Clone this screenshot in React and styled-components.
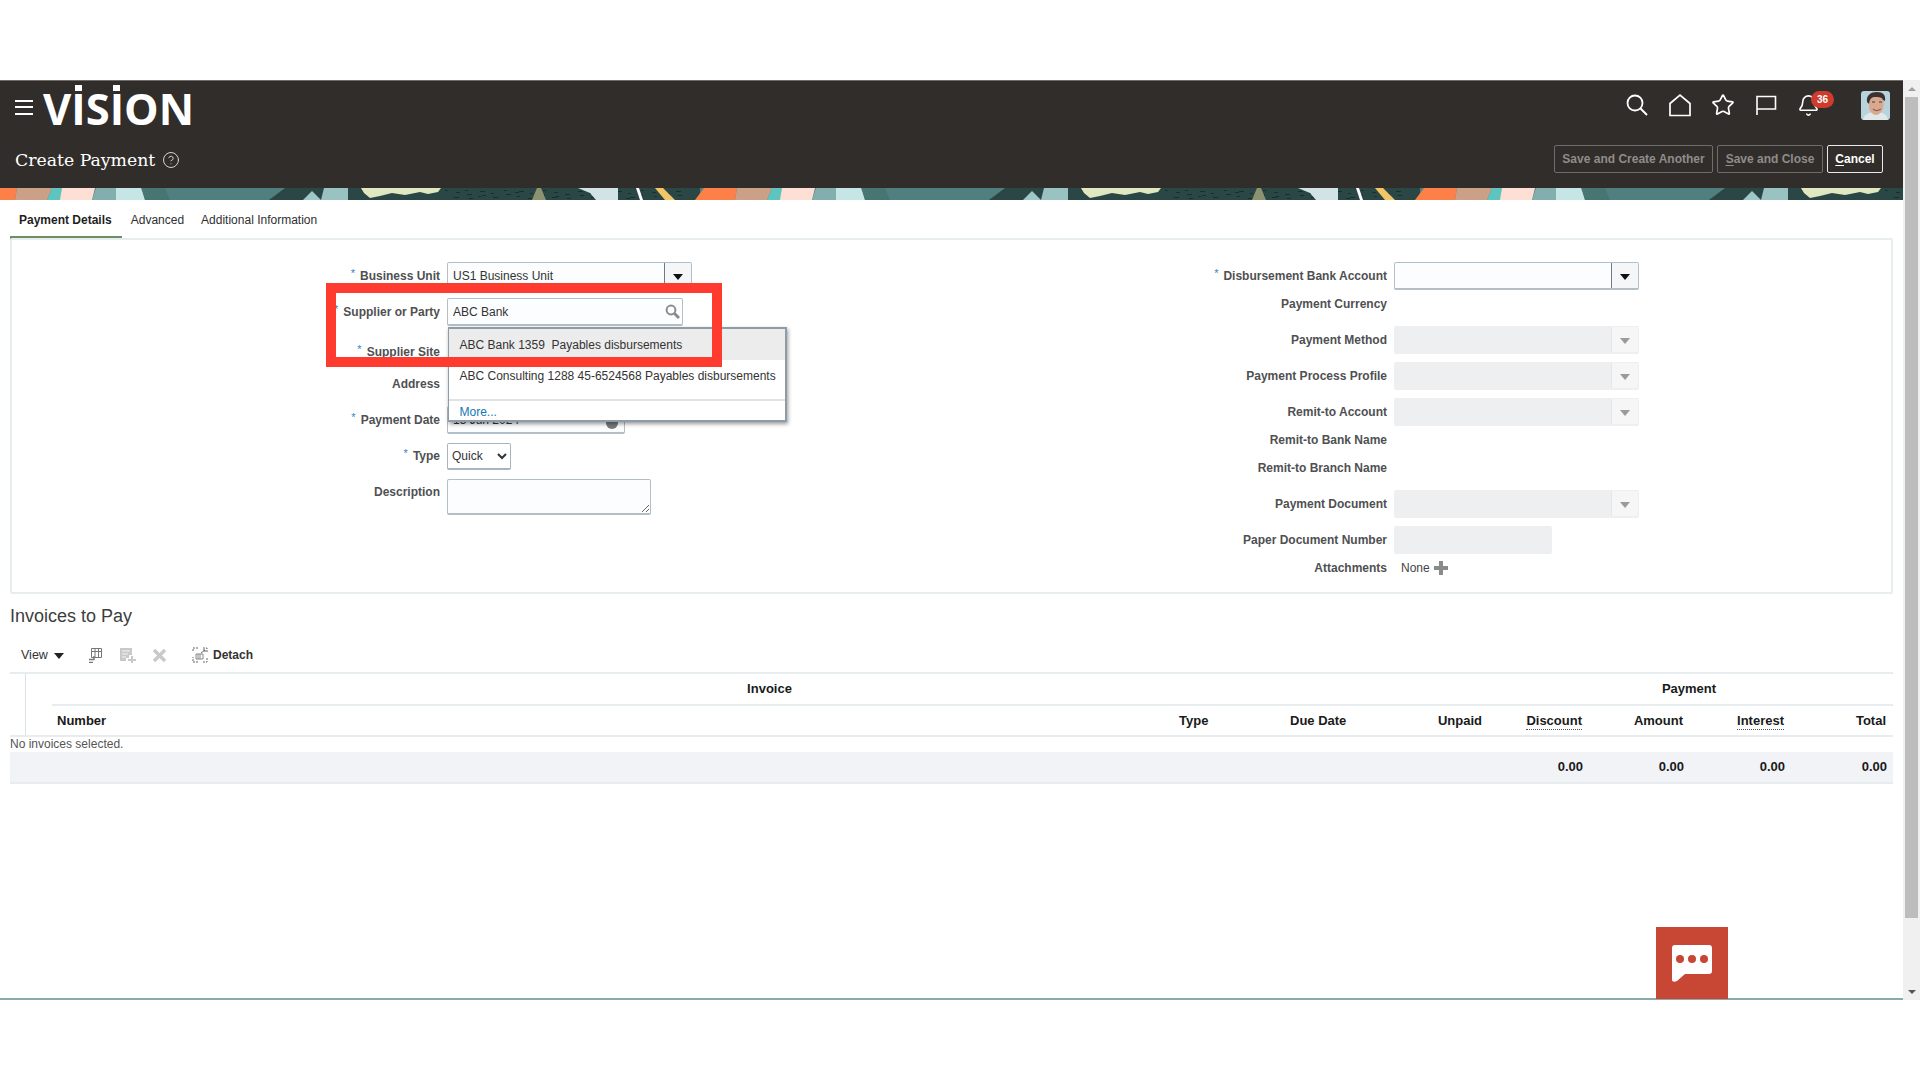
import React from 'react'
import styled, { createGlobalStyle } from 'styled-components'
import { Star, Bell, CircleHelp } from 'lucide-react'

const GlobalStyle = createGlobalStyle`
  html, body {
    margin: 0;
    height: 1080px;
    overflow: hidden;
    background: #fff;
    font-family: "Liberation Sans", Arial, sans-serif;
    font-size: 12px;
  }
  * { box-sizing: border-box; }
`

const Frame = styled.div`
  margin-top: 80px;
  height: 920px;
  display: flex;
`

const Main = styled.div`
  position: relative;
  width: 1903px;
  border-bottom: 2px solid #8aabaa;
`

const Header = styled.header`
  height: 108px;
  background: #312d2a;
  border-top: 1px solid #6f6c6a;
  color: #fff;
`

const TopRow = styled.div`
  height: 50px;
  display: flex;
  align-items: center;
  padding: 0 13px 0 15px;
`

const Hamburger = styled.div`
  width: 18px;
  height: 15px;
  margin-top: 2px;
  border-top: 2px solid #fff;
  border-bottom: 2px solid #fff;
  display: flex;
  align-items: center;
  &::before {
    content: '';
    display: block;
    width: 100%;
    height: 2px;
    background: #fff;
  }
`

const Logo = styled.div`
  margin-left: 10px;
  margin-top: 6px;
  font-family: "Open Sans", sans-serif;
  font-weight: 700;
  font-size: 43.5px;
  line-height: 44px;
  color: #fff;
  display: flex;
`

const LogoI = styled.span`
  position: relative;
  &::before {
    content: '';
    position: absolute;
    left: 50%;
    top: -2px;
    width: 7px;
    height: 6px;
    margin-left: -3.5px;
    background: #fff;
  }
`

const IconBar = styled.div`
  margin-left: auto;
  display: flex;
  align-items: center;
`

const IconSlot = styled.div`
  position: relative;
  width: 43px;
  height: 26px;
  margin-top: -2px;
  display: flex;
  align-items: center;
  justify-content: center;
`

const Badge = styled.span`
  position: absolute;
  left: 24px;
  top: -1px;
  width: 23px;
  height: 17px;
  border-radius: 9px;
  background: #cf3b2c;
  color: #fff;
  font-size: 10px;
  font-weight: 700;
  line-height: 17px;
  text-align: center;
`

const Avatar = styled.div`
  width: 29px;
  height: 29px;
  margin-left: 31px;
  margin-top: -2px;
  border-radius: 3px;
  overflow: hidden;
`

const PageRow = styled.div`
  height: 57px;
  display: flex;
  align-items: center;
  padding: 0 20px 0 15px;
`

const PageTitle = styled.h1`
  margin: 0;
  font-family: "DejaVu Serif", "Liberation Serif", serif;
  font-weight: 400;
  font-size: 17.3px;
  color: #fff;
`

const HelpMark = styled.span`
  display: flex;
  margin-left: 7px;
  color: #e4e3e2;
`

const ActionBar = styled.div`
  margin-left: auto;
  display: flex;
  gap: 4px;
  margin-top: -1px;
`

const ActionButton = styled.button`
  height: 28px;
  padding: 0;
  width: ${({ $w }) => $w}px;
  font-family: inherit;
  font-size: 12px;
  font-weight: 700;
  background: transparent;
  border-radius: 2px;
  border: 1px solid ${({ $on }) => ($on ? '#e8e8e8' : '#6f6c69')};
  color: ${({ $on }) => ($on ? '#fff' : '#8f8c8a')};
  u { text-underline-offset: 2px; }
`

const BannerBox = styled.div`
  height: 12px;
  svg { display: block; }
`

const Tabs = styled.nav`
  position: relative;
  height: 38px;
  margin: 0 10px;
  display: flex;
`

const Tab = styled.div`
  height: 40px;
  padding: 2px ${({ $active }) => ($active ? 10 : 8)}px 0 9px;
  font-weight: ${({ $active }) => ($active ? 700 : 400)};
  color: ${({ $active }) => ($active ? '#1f1f1f' : '#2f2f2f')};
  border-bottom: 4px solid ${({ $active }) => ($active ? '#6f8f63' : 'transparent')};
  line-height: 36px;
`

const FormPanel = styled.section`
  position: relative;
  height: 356px;
  margin: 0 10px;
  padding-top: 18px;
  border: 2px solid #e7ecef;
  border-radius: 2px;
  display: grid;
  grid-template-columns: 920px 1fr;
`

const FormColumn = styled.div`
  display: flex;
  flex-direction: column;
`

const Row = styled.div`
  position: relative;
  display: flex;
  align-items: ${({ $top }) => ($top ? 'flex-start' : 'center')};
  height: ${({ $h }) => $h || 36}px;
  margin-top: ${({ $mt }) => $mt || 0}px;
  gap: ${({ $gap }) => $gap || 7}px;
`

const Label = styled.label`
  width: ${({ $w }) => $w}px;
  flex: none;
  text-align: right;
  font-weight: 700;
  color: #4f5052;
  line-height: ${({ $lh }) => ($lh ? `${$lh}px` : 'normal')};
`

const Asterisk = styled.span`
  position: relative;
  top: -3px;
  margin-right: 5px;
  font-size: 11px;
  font-weight: 400;
  color: #2f86c9;
`

const FieldBox = styled.div`
  position: relative;
  width: ${({ $w }) => $w}px;
  height: 28px;
  display: flex;
  align-items: center;
  padding-left: 5px;
  border: ${({ $off }) => ($off ? '1px solid #efeff0' : '1px solid #b3bfc7')};
  border-bottom-width: 2px;
  border-radius: 2px;
  background: ${({ $off }) => ($off ? '#eeeff0' : '#fcfdfe')};
  color: #333;
`

const DropButton = styled.span`
  position: absolute;
  right: 0;
  top: 0;
  bottom: 0;
  width: 27px;
  display: flex;
  align-items: center;
  justify-content: center;
  background: ${({ $off }) => ($off ? '#f6f6f7' : '#f4f6f7')};
  border-left: 1px solid ${({ $off }) => ($off ? '#e6e6e7' : '#6f7b84')};
  &::after {
    content: '';
    margin-top: 2px;
    border-left: 5px solid transparent;
    border-right: 5px solid transparent;
    border-top: 6px solid ${({ $off }) => ($off ? '#9a9a9a' : '#111')};
  }
`

const LookupIcon = styled.span`
  position: absolute;
  right: 2px;
  top: 5px;
  display: flex;
`

const ClockMark = styled.span`
  position: absolute;
  right: 6px;
  top: 10px;
  width: 12px;
  height: 12px;
  border-radius: 50%;
  background: #77797b;
`

const TypeSelect = styled.select`
  width: 64px;
  height: 27px;
  padding-left: 0;
  border: 1px solid #a9b5bd;
  border-bottom-width: 2px;
  border-radius: 2px;
  background: #fff;
  font-family: inherit;
  font-size: 12px;
  color: #333;
`

const DescriptionBox = styled.textarea`
  width: 204px;
  height: 36px;
  margin-top: 5px;
  border: 1px solid #b3bfc7;
  border-bottom-width: 2px;
  border-radius: 2px;
  background: #fcfdfe;
`

const PlainValue = styled.div`
  display: flex;
  align-items: center;
  gap: 4px;
  color: #444;
`

const Popup = styled.div`
  position: absolute;
  left: -0.5px;
  top: 28px;
  width: 339px;
  height: 95px;
  overflow: hidden;
  z-index: 5;
  background: #fff;
  border: 2px solid #8d9ca6;
  border-left-width: 1px;
  box-shadow: 1px 2px 4px rgba(0, 0, 0, 0.4);
`

const PopupItem = styled.div`
  height: ${({ $h }) => $h}px;
  padding: ${({ $pt }) => $pt}px 0 0 11px;
  white-space: pre;
  color: #333;
  background: ${({ $hot }) => ($hot ? '#ececec' : '#fff')};
`

const PopupMore = styled.div`
  border-top: 2px solid #dfe3e6;
  padding: 4px 0 0 11px;
  color: #0f79b8;
`

const RedBox = styled.div`
  position: absolute;
  left: -122px;
  top: -16px;
  width: 396px;
  height: 84px;
  border: 10px solid #ff3b30;
  pointer-events: none;
  z-index: 6;
`

const SectionTitle = styled.h2`
  margin: 0;
  height: 45px;
  padding: 0 10px;
  font-size: 18px;
  font-weight: 400;
  line-height: 45px;
  color: #3d3d3d;
`

const Toolbar = styled.div`
  height: 33px;
  padding: 0 0 1px 21px;
  display: flex;
  align-items: center;
  color: #333;
`

const ViewMenu = styled.span`
  display: flex;
  align-items: center;
  gap: 6px;
  width: 67px;
  font-size: 12.5px;
  &::after {
    content: '';
    margin-top: 2px;
    border-left: 5px solid transparent;
    border-right: 5px solid transparent;
    border-top: 6px solid #222;
  }
`

const ToolIcon = styled.span`
  display: flex;
  width: ${({ $w }) => $w}px;
`

const DetachText = styled.span`
  margin-left: 5px;
  font-weight: 700;
  color: #333;
`

const TableHead = styled.div`
  margin: 0 10px;
  border-top: 2px solid #e7ecef;
  border-bottom: 2px solid #e7ecef;
  padding-left: 15px;
  font-size: 13px;
`

const HeadInner = styled.div`
  border-left: 1px solid #dbe1e6;
  padding-left: 26px;
`

const GroupRow = styled.div`
  display: grid;
  grid-template-columns: 1435px 404px;
  height: 32px;
  line-height: 30px;
  border-bottom: 2px solid #e7ecef;
  font-weight: 700;
  color: #1a1a1a;
  text-align: center;
`

const gridCols = '1122px 111px 91px 111px 100px 101px 101px 102px'

const ColumnRow = styled.div`
  display: grid;
  grid-template-columns: ${gridCols};
  height: 29px;
  align-items: center;
  font-weight: 700;
  color: #1a1a1a;
`

const HeadCell = styled.div`
  padding: ${({ $right }) => ($right ? '0 5px 0 0' : '0 0 0 5px')};
  text-align: ${({ $right }) => ($right ? 'right' : 'left')};
  span {
    border-bottom: ${({ $dotted }) => ($dotted ? '1px dotted #555' : '0')};
    padding-bottom: 1px;
  }
`

const EmptyNote = styled.div`
  height: 15px;
  margin: 0 10px;
  line-height: 14px;
  color: #555;
`

const TotalsRow = styled.div`
  height: 32px;
  margin: 0 10px;
  padding: 0 0 1px 42px;
  display: grid;
  grid-template-columns: ${gridCols};
  align-items: center;
  background: #f1f3f6;
  border-bottom: 2px solid #e7ecef;
  font-size: 13px;
  font-weight: 700;
  color: #1a1a1a;
`

const TotalCell = styled.div`
  padding-right: 4px;
  text-align: right;
`

const ChatButton = styled.div`
  position: absolute;
  left: 1656px;
  bottom: -1px;
  width: 72px;
  height: 72px;
  display: flex;
  align-items: center;
  justify-content: center;
  background: #c74634;
`

const Scrollbar = styled.div`
  width: 17px;
  height: 920px;
  background: #f0f0f0;
  display: flex;
  flex-direction: column;
  align-items: center;
`

const ScrollArrow = styled.span`
  height: 17px;
  display: flex;
  align-items: center;
  &::after {
    content: '';
    border-left: 4px solid transparent;
    border-right: 4px solid transparent;
    ${({ $down }) => ($down ? 'border-top: 4px solid #555;' : 'border-bottom: 4px solid #a0a0a0;')}
  }
`

const ScrollThumb = styled.div`
  width: 13px;
  height: 821px;
  background: #bdbdbd;
`

const ScrollGap = styled.div`
  flex: 1;
`

const dashes = Array.from({ length: 46 }, (_, i) => ({
  x: 445 + ((i * 37) % 235),
  y: 2 + ((i * 5) % 9),
  w: 3 + (i % 3),
}))

const Banner = () => (
  <BannerBox>
    <svg width="1903" height="12">
      <defs>
        <pattern id="band" width="720" height="12" patternUnits="userSpaceOnUse">
          <rect width="720" height="12" fill="#4f7f7e" />
          <polygon points="0,0 17,0 15,12 0,12" fill="#fd8049" />
          <polygon points="269,12 285,0 700,0 700,12" fill="#2b4745" />
          <polygon points="695,12 704,0 720,0 720,12" fill="#fd8049" />
          <polygon points="15,12 17,0 52,0 47,12" fill="#cc9f87" />
          <polygon points="47,12 52,0 62,0 61,12" fill="#5fc3bf" />
          <polygon points="60,12 62,0 95,0 92,12" fill="#fedfd5" />
          <polygon points="92,12 96,0 116,0 116,12" fill="#83aeae" />
          <polygon points="116,12 116,0 141,0 145,12" fill="#c6e6e6" />
          <polygon points="145,12 142,0 165,0 170,12" fill="#477572" />
          <polygon points="303,12 312,3 321,12" fill="#9fc8c8" />
          <polygon points="321,12 324,0 348,0 348,12" fill="#9bc2c3" />
          {dashes.map((d, i) => (
            <rect key={i} x={d.x} y={d.y} width={d.w} height="1" fill="#16302e" />
          ))}
          <polygon points="361,0 441,0 438,4 428,6 420,4 405,7 392,5 380,8 370,10 364,5" fill="#dfe8c0" />
          <polygon points="532,12 537,0 541,0 546,12" fill="#8c9270" />
          <polygon points="578,0 618,0 618,12 596,12 590,5" fill="#d2e3e5" />
          <polygon points="636,0 639,0 643,12 640,12" fill="#fff" />
          <polygon points="655,0 663,0 675,12 665,12" fill="#f3c566" />
        </pattern>
      </defs>
      <rect width="1903" height="12" fill="url(#band)" />
    </svg>
  </BannerBox>
)

const SearchGlyph = () => (
  <svg width="24" height="24" viewBox="0 0 24 24" fill="none" stroke="#fff" strokeWidth="1.8">
    <circle cx="10" cy="10" r="7.5" />
    <path d="M15.5 15.5L22 22" strokeWidth="2" />
  </svg>
)

const HomeIcon = () => (
  <svg width="24" height="24" viewBox="0 0 24 24" fill="none" stroke="#fff" strokeWidth="1.7">
    <path d="M2 22.5V10.5L12 2l10 8.5v12z" />
  </svg>
)

const FlagIcon = () => (
  <svg width="22" height="22" viewBox="0 0 22 22" fill="none" stroke="#fff" strokeWidth="1.6">
    <path d="M2 21V2.5h18.5v12.5H2" />
  </svg>
)

const LookupGlyph = () => (
  <svg width="15" height="15" viewBox="0 0 15 15" fill="none" stroke="#8b8b8b" strokeWidth="2">
    <circle cx="6" cy="6" r="4.4" />
    <path d="M9.5 9.5L14 14" strokeWidth="3" />
  </svg>
)

const FaceImage = () => (
  <svg width="29" height="29" viewBox="0 0 29 29">
    <rect width="29" height="29" fill="#b8d3dc" />
    <path d="M2 29c1-6 6-7 10-8h6c5 1 8 3 9 8z" fill="#dfe9ea" />
    <path d="M8 9c0-5 4-6 8-6s7 2 7 7l-1 7c-1 4-4 7-7 7s-6-3-7-7z" fill="#d9a98f" />
    <path d="M6 11C5 4 10 1 16 1s9 3 8 9l-2-1c-1-3-4-3-8-3s-5 2-6 7z" fill="#3a3230" />
    <path d="M11 11h3M18 11h3" stroke="#4a3a34" strokeWidth="1.2" />
    <path d="M12 18c2 2 5 2 8 0" stroke="#9e5f50" strokeWidth="1.2" fill="none" />
  </svg>
)

const FreezeIcon = () => (
  <svg width="15" height="16" viewBox="0 0 15 16" fill="none" stroke="#777" strokeWidth="1">
    <path d="M3.5 1.5h10v9h-10zM3.5 4.5h10M7 1.5v9M10.5 1.5v9" />
    <path d="M6 9v3.5H1M1 15.5h4" strokeWidth="1.4" />
  </svg>
)

const AddRowIcon = () => (
  <svg width="16" height="16" viewBox="0 0 16 16" fill="#c9c9c9">
    <path d="M0 1h12v7H9v3H6v3H0z" />
    <path d="M2 4h8M2 7h6M2 10h4" stroke="#f4f4f4" />
    <path d="M11 9h2v3h3v2h-3v2h-2v-2H8v-2h3z" />
  </svg>
)

const RemoveIcon = () => (
  <svg width="15" height="15" viewBox="0 0 15 15" stroke="#c9c9c9" strokeWidth="3.4">
    <path d="M2 2l11 11M13 2L2 13" />
  </svg>
)

const DetachIcon = () => (
  <svg width="16" height="16" viewBox="0 0 16 16" fill="none" stroke="#666">
    <path d="M1 4V1h5M11 1h4v4M15 11v4h-5M6 15H1v-5" strokeDasharray="2 1" />
    <path d="M4 7h7v5H4zM6 7v5M8 7v5" stroke="#888" />
    <path d="M9 6l4-3M11 3h2v2" />
  </svg>
)

const PlusIcon = () => (
  <svg width="14" height="14" viewBox="0 0 14 14" fill="#8a8a8a">
    <path d="M5 0h4v5h5v4H9v5H5V9H0V5h5z" />
  </svg>
)

const ChatIcon = () => (
  <svg width="40" height="37" viewBox="0 0 40 37">
    <path d="M3 0h34a3 3 0 0 1 3 3v23a3 3 0 0 1-3 3H13l-8 7c-2 1-5 1-5-1V3a3 3 0 0 1 3-3z" fill="#fff" />
    <circle cx="8" cy="14" r="4" fill="#c74634" />
    <circle cx="20" cy="14" r="4" fill="#c74634" />
    <circle cx="32" cy="14" r="4" fill="#c74634" />
  </svg>
)

const Req = () => <Asterisk>*</Asterisk>

const LEFT = 428
const RIGHT = 455

const RightSelect = ({ label, required, active, mt }) => (
  <Row $mt={mt}>
    <Label $w={RIGHT}>
      {required && <Req />}
      {label}
    </Label>
    <FieldBox $w={245} $off={!active}>
      <DropButton $off={!active} />
    </FieldBox>
  </Row>
)

const RightText = ({ label, h = 20 }) => (
  <Row $h={h}>
    <Label $w={RIGHT}>{label}</Label>
  </Row>
)

export default function App() {
  return (
    <>
      <GlobalStyle />
      <Frame>
        <Main>
          <Header>
            <TopRow>
              <Hamburger />
              <Logo>
                V<LogoI>I</LogoI>S<LogoI>I</LogoI>ON
              </Logo>
              <IconBar>
                <IconSlot><SearchGlyph /></IconSlot>
                <IconSlot><HomeIcon /></IconSlot>
                <IconSlot><Star size={24} strokeWidth={1.7} color="#fff" /></IconSlot>
                <IconSlot><FlagIcon /></IconSlot>
                <IconSlot>
                  <Bell size={23} strokeWidth={1.7} color="#fff" />
                  <Badge>36</Badge>
                </IconSlot>
                <Avatar><FaceImage /></Avatar>
              </IconBar>
            </TopRow>
            <PageRow>
              <PageTitle>Create Payment</PageTitle>
              <HelpMark><CircleHelp size={18} strokeWidth={1.2} /></HelpMark>
              <ActionBar>
                <ActionButton $w={159}>Save and Create Another</ActionButton>
                <ActionButton $w={106}><u>S</u>ave and Close</ActionButton>
                <ActionButton $w={56} $on><u>C</u>ancel</ActionButton>
              </ActionBar>
            </PageRow>
          </Header>
          <Banner />
          <Tabs>
            <Tab $active>Payment Details</Tab>
            <Tab>Advanced</Tab>
            <Tab>Additional Information</Tab>
          </Tabs>
          <FormPanel>
            <FormColumn>
              <Row>
                <Label $w={LEFT}><Req />Business Unit</Label>
                <FieldBox $w={245}>US1 Business Unit<DropButton /></FieldBox>
              </Row>
              <Row>
                <Label $w={LEFT}><Req />Supplier or Party</Label>
                <FieldBox $w={236}>
                  ABC Bank
                  <LookupIcon><LookupGlyph /></LookupIcon>
                  <Popup>
                    <PopupItem $h={31} $hot $pt={9}>ABC Bank 1359  Payables disbursements</PopupItem>
                    <PopupItem $h={39} $pt={9}>ABC Consulting 1288 45-6524568 Payables disbursements</PopupItem>
                    <PopupMore>More...</PopupMore>
                  </Popup>
                  <RedBox />
                </FieldBox>
              </Row>
              <Row $h={28} $mt={8}>
                <Label $w={LEFT}><Req />Supplier Site</Label>
              </Row>
              <Row>
                <Label $w={LEFT}>Address</Label>
              </Row>
              <Row>
                <Label $w={LEFT}><Req />Payment Date</Label>
                <FieldBox $w={178}>15 Jun 2024<ClockMark /></FieldBox>
              </Row>
              <Row>
                <Label $w={LEFT}><Req />Type</Label>
                <TypeSelect defaultValue="Quick">
                  <option>Quick</option>
                  <option>Manual</option>
                </TypeSelect>
              </Row>
              <Row $h={44} $top>
                <Label $w={LEFT} $lh={36}>Description</Label>
                <DescriptionBox />
              </Row>
            </FormColumn>
            <FormColumn>
              <RightSelect label="Disbursement Bank Account" required active />
              <RightText label="Payment Currency" />
              <RightSelect label="Payment Method" mt={8} />
              <RightSelect label="Payment Process Profile" />
              <RightSelect label="Remit-to Account" />
              <RightText label="Remit-to Bank Name" />
              <RightText label="Remit-to Branch Name" h={36} />
              <RightSelect label="Payment Document" />
              <Row>
                <Label $w={RIGHT}>Paper Document Number</Label>
                <FieldBox $w={158} $off />
              </Row>
              <Row $h={20} $gap={14}>
                <Label $w={RIGHT}>Attachments</Label>
                <PlainValue>None <PlusIcon /></PlainValue>
              </Row>
            </FormColumn>
          </FormPanel>
          <SectionTitle>Invoices to Pay</SectionTitle>
          <Toolbar>
            <ViewMenu>View</ViewMenu>
            <ToolIcon $w={32}><FreezeIcon /></ToolIcon>
            <ToolIcon $w={32}><AddRowIcon /></ToolIcon>
            <ToolIcon $w={40}><RemoveIcon /></ToolIcon>
            <ToolIcon $w={16}><DetachIcon /></ToolIcon>
            <DetachText>Detach</DetachText>
          </Toolbar>
          <TableHead>
            <HeadInner>
              <GroupRow>
                <div>Invoice</div>
                <div>Payment</div>
              </GroupRow>
              <ColumnRow>
                <HeadCell>Number</HeadCell>
                <HeadCell>Type</HeadCell>
                <HeadCell>Due Date</HeadCell>
                <HeadCell $right>Unpaid</HeadCell>
                <HeadCell $right $dotted><span>Discount</span></HeadCell>
                <HeadCell $right>Amount</HeadCell>
                <HeadCell $right $dotted><span>Interest</span></HeadCell>
                <HeadCell $right>Total</HeadCell>
              </ColumnRow>
            </HeadInner>
          </TableHead>
          <EmptyNote>No invoices selected.</EmptyNote>
          <TotalsRow>
            <div />
            <div />
            <div />
            <div />
            <TotalCell>0.00</TotalCell>
            <TotalCell>0.00</TotalCell>
            <TotalCell>0.00</TotalCell>
            <TotalCell>0.00</TotalCell>
          </TotalsRow>
          <ChatButton><ChatIcon /></ChatButton>
        </Main>
        <Scrollbar>
          <ScrollArrow />
          <ScrollThumb />
          <ScrollGap />
          <ScrollArrow $down />
        </Scrollbar>
      </Frame>
    </>
  )
}
